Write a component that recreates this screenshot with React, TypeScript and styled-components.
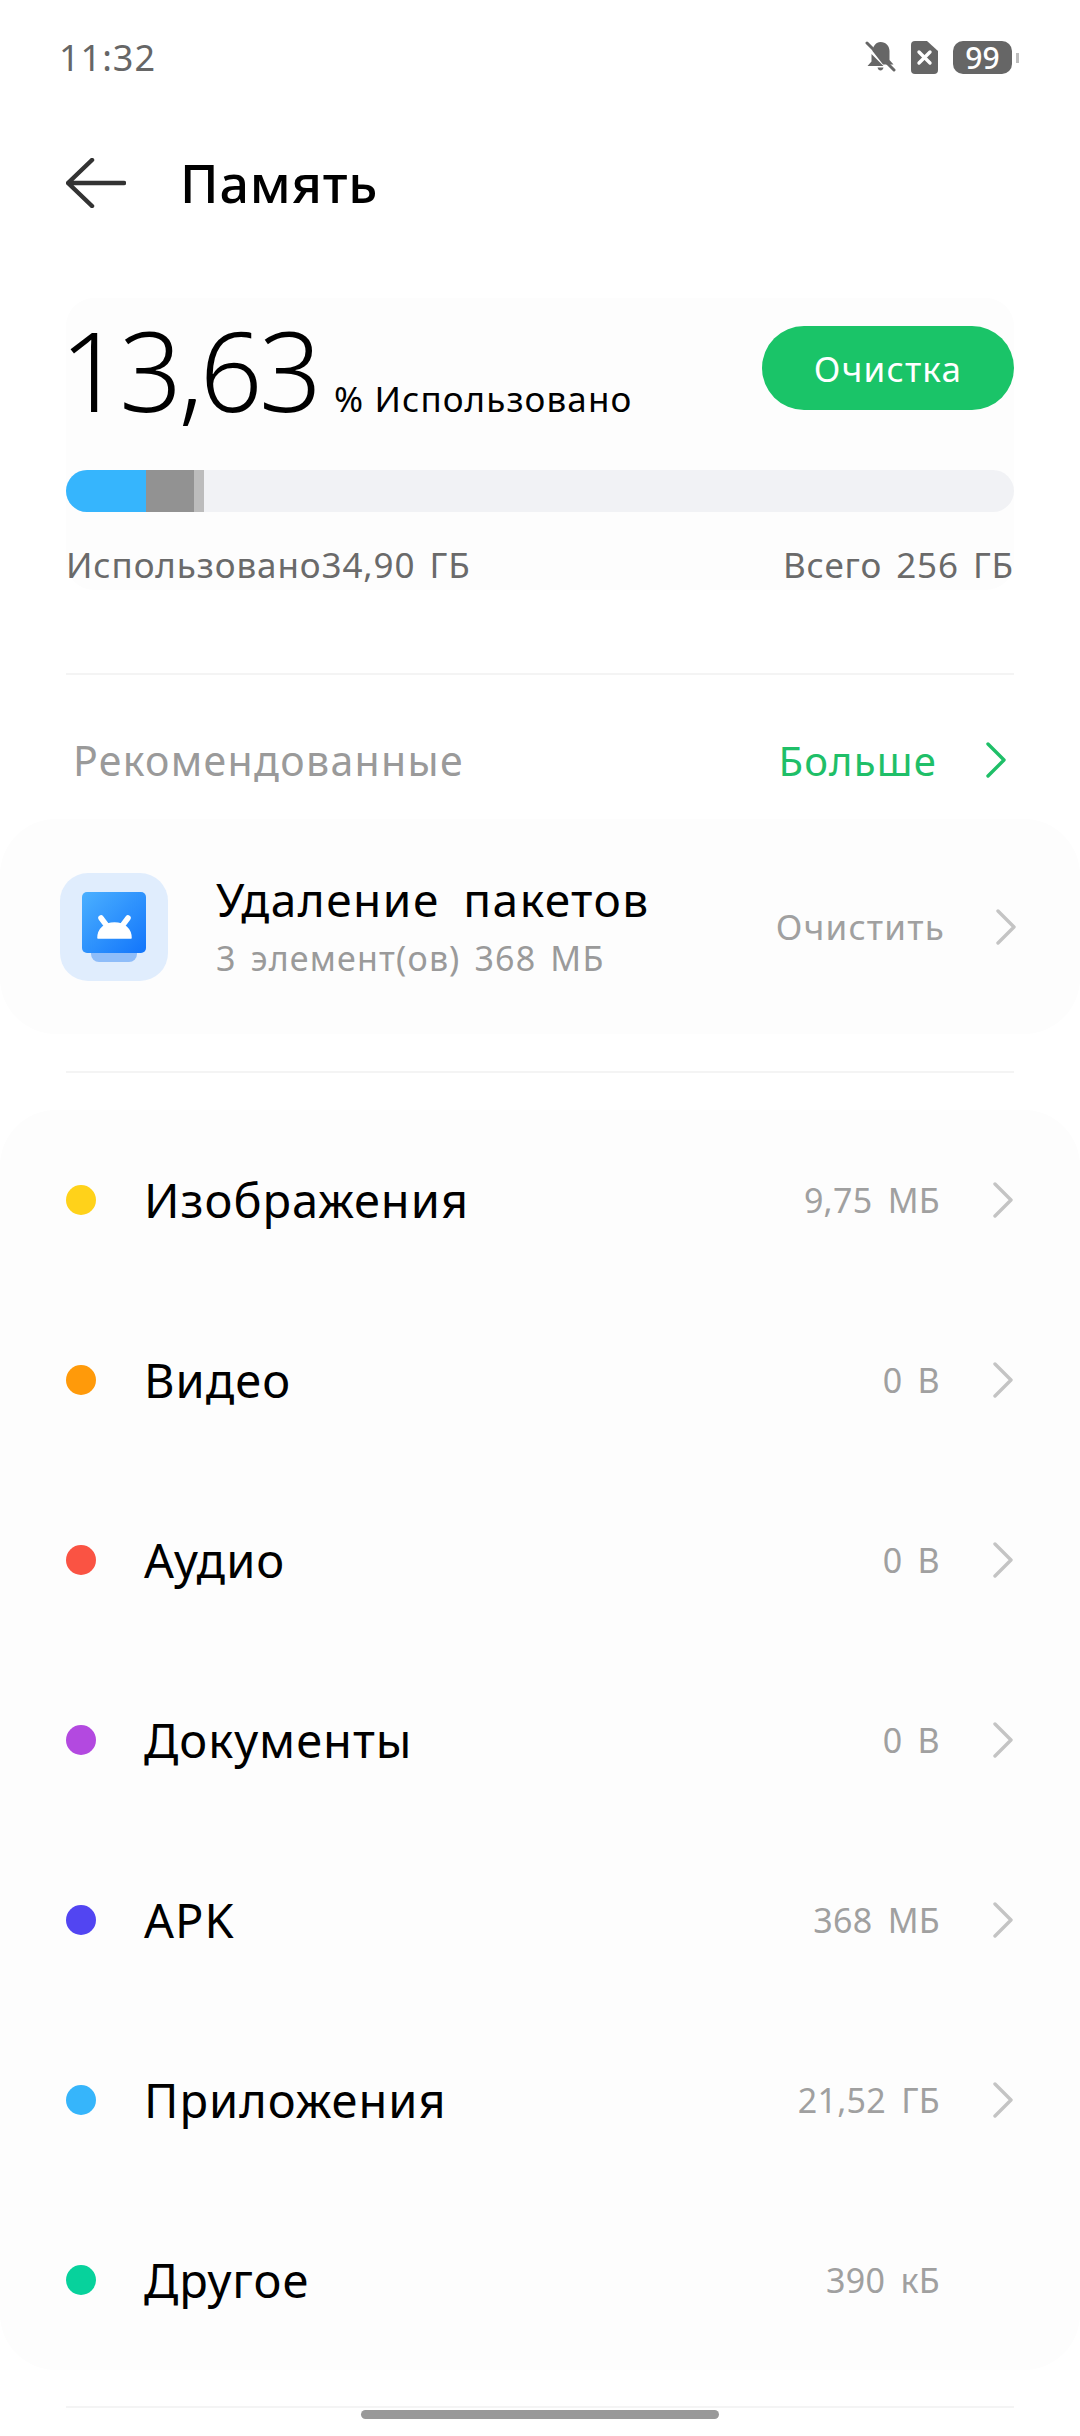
import React from 'react';
import styled, { createGlobalStyle } from 'styled-components';

const GlobalStyle = createGlobalStyle`
  html, body {
    margin: 0;
    padding: 0;
    background: #ffffff;
  }
  * {
    box-sizing: border-box;
  }
`;

const Page = styled.div`
  width: 1080px;
  height: 2436px;
  overflow: hidden;
  background: #ffffff;
  color: #000000;
  font-family: 'Noto Sans', 'Open Sans', sans-serif;
`;

const StatusBar = styled.div`
  height: 115px;
  padding: 0 68px 0 59px;
  display: flex;
  align-items: center;
  justify-content: space-between;
`;

const Clock = styled.span`
  font-size: 36px;
  letter-spacing: 1px;
  color: #666666;
`;

const StatusIcons = styled.div`
  display: flex;
  align-items: center;
  gap: 15px;
`;

const Battery = styled.div`
  position: relative;
  width: 59px;
  height: 33px;
  border-radius: 10px;
  background: #666666;
  color: #ffffff;
  font-size: 30px;
  font-weight: 500;
  line-height: 33px;
  text-align: center;

  &::after {
    content: '';
    position: absolute;
    right: -7px;
    top: 12px;
    width: 3px;
    height: 10px;
    background: #bdbdbd;
  }
`;

const Header = styled.div`
  height: 138px;
  padding: 0 0 3px 66px;
  display: flex;
  align-items: center;
  gap: 54px;
`;

const Title = styled.h1`
  margin: 0;
  font-size: 52px;
  font-weight: 500;
  letter-spacing: 0.8px;
`;

const Summary = styled.section`
  margin: 45px 66px 0;
  height: 292px;
  border-radius: 28px;
  background: #fdfdfd;
  padding-top: 28px;
`;

const SummaryTop = styled.div`
  height: 100px;
  display: flex;
  align-items: flex-end;
  justify-content: space-between;
`;

const Usage = styled.div`
  display: flex;
  align-items: baseline;
  gap: 16px;
  margin-bottom: 4px;
`;

const Percent = styled.span`
  margin-left: -6px;
  font-size: 110px;
  font-weight: 350;
  line-height: 100px;
  letter-spacing: -3.6px;
`;

const UsageLabel = styled.span`
  font-size: 35px;
  letter-spacing: 1.1px;
`;

const CleanButton = styled.button`
  width: 252px;
  height: 84px;
  margin-bottom: 16px;
  border: 0;
  border-radius: 42px;
  background: #1ac468;
  color: #ffffff;
  font-family: inherit;
  font-size: 35px;
  letter-spacing: 1.2px;
`;

const Bar = styled.div`
  margin-top: 44px;
  height: 42px;
  border-radius: 21px;
  overflow: hidden;
  display: flex;
  background: #f1f2f5;
`;

const BarPart = styled.div<{ $width: number; $color: string }>`
  width: ${({ $width }) => $width}px;
  background: ${({ $color }) => $color};
`;

const SummaryFoot = styled.div`
  margin-top: 29px;
  display: flex;
  justify-content: space-between;
  font-size: 35px;
  letter-spacing: 0.9px;
  word-spacing: 4px;
  color: #6a6a6a;
`;

const Divider = styled.div<{ $top: number }>`
  height: 2px;
  margin: ${({ $top }) => $top}px 66px 0;
  background: #f4f4f4;
`;

const SectionHead = styled.div`
  height: 144px;
  padding: 26px 73px 0 73px;
  display: flex;
  align-items: center;
  justify-content: space-between;
`;

const SectionTitle = styled.span`
  font-size: 41px;
  letter-spacing: 1.35px;
  color: #9a9a9a;
`;

const MoreLink = styled.div`
  display: flex;
  align-items: center;
  gap: 48px;
  font-size: 40px;
  letter-spacing: 1.2px;
  color: #1fbf68;
`;

const Card = styled.section`
  background: #fdfdfd;
  border-radius: 56px;
`;

const RecommendCard = styled(Card)`
  height: 215px;
  padding: 0 63px 0 60px;
  display: flex;
  align-items: center;
`;

const AppIcon = styled.div`
  width: 108px;
  height: 108px;
  border-radius: 28px;
  background: #e0edfd;
  display: flex;
  align-items: center;
  justify-content: center;
`;

const RecommendText = styled.div`
  margin-left: 48px;
  padding-bottom: 3px;
  flex: 1;
`;

const RecommendTitle = styled.div`
  font-size: 46px;
  line-height: 60px;
  letter-spacing: 1.5px;
  word-spacing: 10px;
`;

const RecommendSub = styled.div`
  margin-top: 6px;
  font-size: 34px;
  line-height: 46px;
  letter-spacing: 1.2px;
  word-spacing: 4px;
  color: #9a9a9a;
`;

const RowAction = styled.div`
  display: flex;
  align-items: center;
  gap: 50px;
  font-size: 35px;
  letter-spacing: 1.2px;
  color: #a0a0a0;
`;

const ListCard = styled(Card)`
  margin-top: 37px;
`;

const Row = styled.div`
  height: 180px;
  padding-left: 66px;
  display: flex;
  align-items: center;
`;

const Dot = styled.span<{ $color: string }>`
  width: 30px;
  height: 30px;
  border-radius: 50%;
  background: ${({ $color }) => $color};
`;

const RowLabel = styled.span`
  margin-left: 48px;
  flex: 1;
  font-size: 47px;
  letter-spacing: 1px;
`;

const RowValue = styled.span`
  width: 300px;
  text-align: right;
  font-size: 34px;
  letter-spacing: 0.3px;
  word-spacing: 6px;
  color: #a0a0a0;
`;

const ChevronSlot = styled.span`
  width: 140px;
  padding-left: 52px;
  display: flex;
`;

const HomeIndicator = styled.div`
  width: 358px;
  height: 9px;
  margin: 2px auto 0;
  border-radius: 5px;
  background: #999999;
`;

const Chevron = ({ color }: { color: string }) => (
  <svg width="22" height="36" viewBox="0 0 22 36" fill="none">
    <path d="M3 2l16 16L3 34" stroke={color} strokeWidth="3.4" strokeLinecap="round" strokeLinejoin="round" />
  </svg>
);

const BackArrow = () => (
  <svg width="60" height="50" viewBox="0 0 60 50" fill="none">
    <path d="M26 2L2 25l24 23M3 25h55" stroke="#333333" strokeWidth="4.5" strokeLinecap="round" strokeLinejoin="round" />
  </svg>
);

const BellOff = () => (
  <svg width="31" height="33" viewBox="0 0 31 33" fill="#666666">
    <path d="M15.500 1c5.500 0 9 4 9 9v9l4 4.500H18L7.500 10c.5-5 3.500-9 8-9zM6.500 13l12 12H2.500l4-4.500z" />
    <path d="M12.500 26.500h6c-.5 2-1.500 3-3 3s-2.500-1-3-3z" />
    <path d="M2 2l27 27" stroke="#666666" strokeWidth="3" strokeLinecap="round" />
  </svg>
);

const SimOff = () => (
  <svg width="27" height="33" viewBox="0 0 27 33">
    <path d="M4 0h12l11 10v19a4 4 0 0 1-4 4H4a4 4 0 0 1-4-4V4a4 4 0 0 1 4-4z" fill="#666666" />
    <path d="M8 11l11 11M19 11L8 22" stroke="#ffffff" strokeWidth="3.4" strokeLinecap="round" />
  </svg>
);

const PackageIcon = () => (
  <svg width="64" height="70" viewBox="0 0 64 70">
    <defs>
      <linearGradient id="pkg" x1="0" y1="0" x2="1" y2="1">
        <stop offset="0" stopColor="#4bb0ff" />
        <stop offset="1" stopColor="#1275fb" />
      </linearGradient>
    </defs>
    <path d="M9 55h46v7a8 8 0 0 1-8 8H17a8 8 0 0 1-8-8z" fill="#8fbdf9" />
    <rect width="64" height="61" rx="5" fill="url(#pkg)" />
    <path d="M16 46c0-9 7-15 16.500-15S49 37 49 46z" fill="#ffffff" strokeLinejoin="round" stroke="#ffffff" strokeWidth="1.500" />
    <path d="M19 26l6 8M46 26l-6 8" stroke="#ffffff" strokeWidth="5.500" strokeLinecap="round" />
  </svg>
);

const categories = [
  { label: 'Изображения', value: '9,75 МБ', color: '#ffd21a' },
  { label: 'Видео', value: '0 В', color: '#ff9a0a' },
  { label: 'Аудио', value: '0 В', color: '#fa5343' },
  { label: 'Документы', value: '0 В', color: '#b349e0' },
  { label: 'APK', value: '368 МБ', color: '#5245f2' },
  { label: 'Приложения', value: '21,52 ГБ', color: '#36b5fb' },
  { label: 'Другое', value: '390 кБ', color: '#07d29c', last: true },
];

const App: React.FC = () => {
  return (
    <Page>
      <GlobalStyle />
      <StatusBar>
        <Clock>11:32</Clock>
        <StatusIcons>
          <BellOff />
          <SimOff />
          <Battery>99</Battery>
        </StatusIcons>
      </StatusBar>

      <Header>
        <BackArrow />
        <Title>Память</Title>
      </Header>

      <Summary>
        <SummaryTop>
          <Usage>
            <Percent>13,63</Percent>
            <UsageLabel>% Использовано</UsageLabel>
          </Usage>
          <CleanButton>Очистка</CleanButton>
        </SummaryTop>
        <Bar>
          <BarPart $width={80} $color="#36b5fd" />
          <BarPart $width={48} $color="#929292" />
          <BarPart $width={10} $color="#bcbcbc" />
        </Bar>
        <SummaryFoot>
          <span>Использовано34,90 ГБ</span>
          <span>Всего 256 ГБ</span>
        </SummaryFoot>
      </Summary>

      <Divider $top={83} />

      <SectionHead>
        <SectionTitle>Рекомендованные</SectionTitle>
        <MoreLink>
          Больше
          <Chevron color="#1fbf68" />
        </MoreLink>
      </SectionHead>

      <RecommendCard>
        <AppIcon>
          <PackageIcon />
        </AppIcon>
        <RecommendText>
          <RecommendTitle>Удаление пакетов</RecommendTitle>
          <RecommendSub>3 элемент(ов) 368 МБ</RecommendSub>
        </RecommendText>
        <RowAction>
          Очистить
          <Chevron color="#c4c4c4" />
        </RowAction>
      </RecommendCard>

      <Divider $top={37} />

      <ListCard>
        {categories.map((item) => (
          <Row key={item.label}>
            <Dot $color={item.color} />
            <RowLabel>{item.label}</RowLabel>
            <RowValue>{item.value}</RowValue>
            <ChevronSlot>{!item.last && <Chevron color="#c4c4c4" />}</ChevronSlot>
          </Row>
        ))}
      </ListCard>

      <Divider $top={36} />
      <HomeIndicator />
    </Page>
  );
};

export default App;
